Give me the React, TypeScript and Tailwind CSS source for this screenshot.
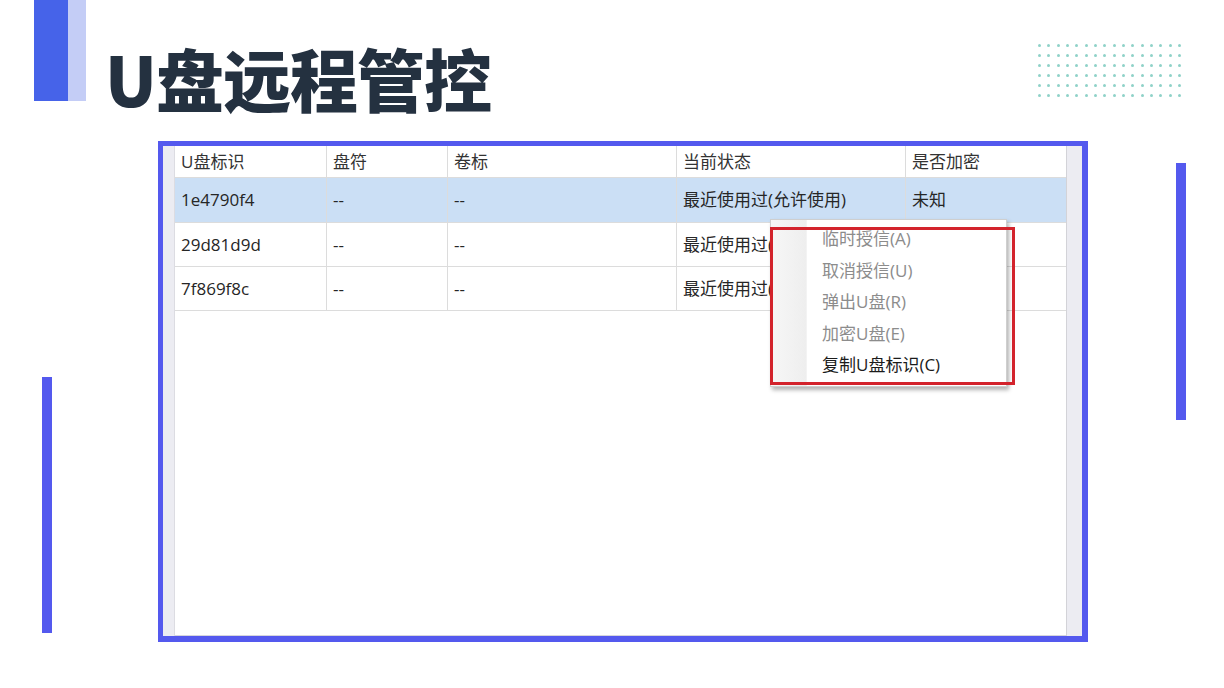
const rows = [
  { id: "1e4790f4", letter: "--", label: "--", state: "最近使用过(允许使用)", enc: "未知", selected: true },
  { id: "29d81d9d", letter: "--", label: "--", state: "最近使用过(允许使用)", enc: "未知", selected: false },
  { id: "7f869f8c", letter: "--", label: "--", state: "最近使用过(允许使用)", enc: "未知", selected: false },
];

const headers = ["U盘标识", "盘符", "卷标", "当前状态", "是否加密"];

const menuItems = [
  { text: "临时授信(A)", enabled: false },
  { text: "取消授信(U)", enabled: false },
  { text: "弹出U盘(R)", enabled: false },
  { text: "加密U盘(E)", enabled: false },
  { text: "复制U盘标识(C)", enabled: true },
];

const uiFont = { fontFamily: '"Open Sans", "Noto Sans CJK SC", sans-serif' };

function DotGrid() {
  return (
    <div className="grid grid-cols-[repeat(16,3px)] gap-x-[6.33px] gap-y-[7px]">
      {Array.from({ length: 96 }).map((_, i) => (
        <div key={i} className="w-[3px] h-[3px] rounded-full bg-[#8fd2c8]" />
      ))}
    </div>
  );
}

function ContextMenu() {
  return (
    <div className="absolute left-[607px] top-[73px] w-[237px] h-[168px] bg-white border border-[#cfcfcf] shadow-[2px_3px_4px_rgba(0,0,0,0.3)] flex">
      <div className="w-[36px] h-full bg-gradient-to-r from-[#f7f7f7] to-[#eeeeee] border-r border-[#f3f3f3]" />
      <div className="flex flex-col pt-[3px] pl-[15px]">
        {menuItems.map((m) => (
          <div
            key={m.text}
            className={`h-[31.5px] flex items-center text-[17px] ${m.enabled ? "text-[#1b1b1b]" : "text-[#8c8c8c]"}`}
          >
            {m.text}
          </div>
        ))}
      </div>
    </div>
  );
}

function DeviceTable() {
  return (
    <div className="relative w-[919px] h-[490px] flex bg-white" style={uiFont}>
      <div className="w-[12px] h-full bg-[#ececf2] border-r border-[#dcdce2]" />
      <div className="w-[891px] h-full border-b border-[#d6d6dc]">
        <div className="grid grid-cols-[152px_121px_229px_229px_160px] text-[17px] text-[#262626]">
          {headers.map((h, i) => (
            <div
              key={h}
              className={`h-[32px] flex items-center pl-[6px] border-b border-[#dcdcdc] text-[#333] ${i < 4 ? "border-r" : ""}`}
            >
              {h}
            </div>
          ))}
          {rows.map((r, ri) =>
            [r.id, r.letter, r.label, r.state, r.enc].map((c, i) => (
              <div
                key={`${r.id}-${i}`}
                className={`${ri === 0 ? "h-[45px]" : "h-[44px]"} flex items-center pl-[6px] border-b border-[#dcdcdc] ${i < 4 ? "border-r" : ""} ${r.selected ? "bg-[#cbdff5] border-[#c0d3ea]" : "bg-white"}`}
              >
                {c}
              </div>
            ))
          )}
        </div>
      </div>
      <div className="w-[16px] h-full bg-[#ececf2] border-l border-[#d3d3d8]" />

      <ContextMenu />

      {/* highlight box round the menu */}
      <div className="absolute left-[607px] top-[81px] w-[245px] h-[158px] border-[3px] border-[#d3232c]" />
    </div>
  );
}

export default function App() {
  return (
    <div className="w-[1224px] h-[688px] bg-white overflow-hidden flex flex-col">
      <div className="h-[141px] flex items-start">
        <div className="ml-[34px] flex">
          <div className="w-[34px] h-[101px] bg-[#4663e9]" />
          <div className="w-[18px] h-[101px] bg-[#c4cdf6]" />
        </div>
        <h1
          className="ml-[19px] mt-[44px] text-[68px] leading-none font-black text-[#243140] tracking-[-1px]"
          style={{ fontFamily: '"Noto Sans CJK SC", sans-serif' }}
        >
          U盘远程管控
        </h1>
        <div className="ml-auto mr-[43px] mt-[44px]">
          <DotGrid />
        </div>
      </div>

      <div className="flex items-start">
        <div className="ml-[42px] mt-[236px] w-[10px] h-[256px] bg-[#5459ee]" />
        <div className="ml-[106px] w-[930px] h-[501px] border-l-[5px] border-t-[5px] border-r-[6px] border-b-[6px] border-[#5459ee]">
          <DeviceTable />
        </div>
        <div className="ml-[88px] mt-[22px] w-[10px] h-[257px] bg-[#5459ee]" />
      </div>
    </div>
  );
}
